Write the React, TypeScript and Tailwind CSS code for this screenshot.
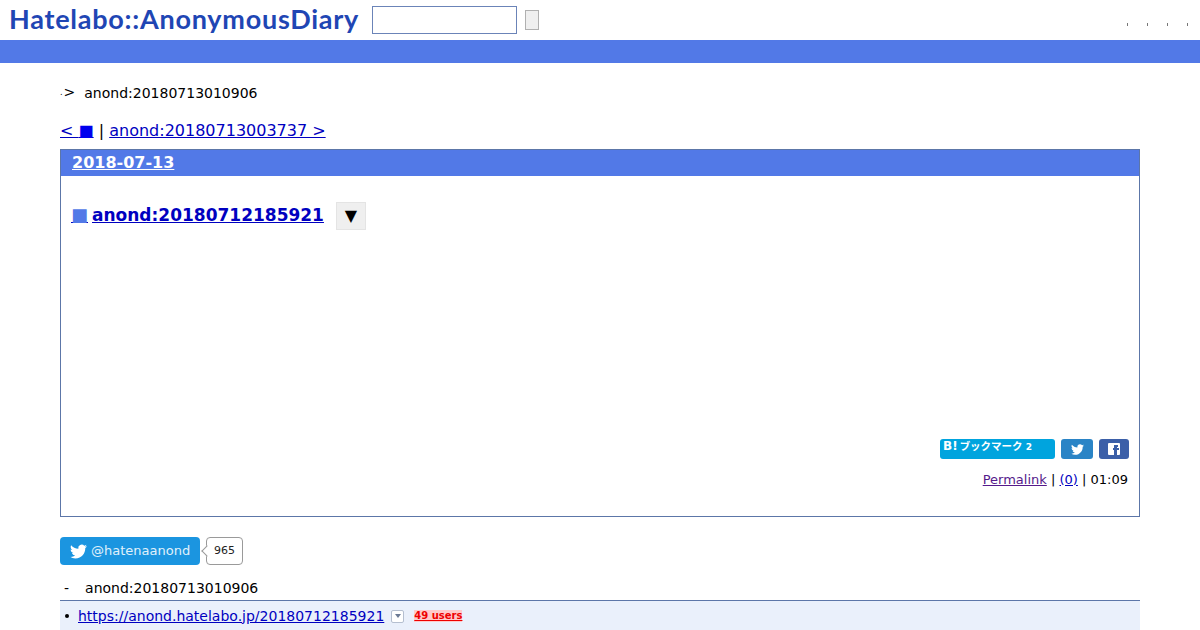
import React from 'react'

const SANS = 'font-["DejaVu_Sans",sans-serif]'

function TwitterBird({ className }: { className: string }) {
  return (
    <svg viewBox="0 0 24 24" fill="currentColor" className={className}>
      <path d="M23.95 4.57a10 10 0 0 1-2.82.78 4.96 4.96 0 0 0 2.16-2.72c-.95.55-2 .95-3.12 1.18a4.92 4.92 0 0 0-8.38 4.48C7.69 8.1 4.07 6.13 1.64 3.16a4.82 4.82 0 0 0-.67 2.48c0 1.71.87 3.21 2.19 4.1a4.9 4.9 0 0 1-2.23-.62v.06a4.92 4.92 0 0 0 3.95 4.83 5 5 0 0 1-2.21.08 4.94 4.94 0 0 0 4.6 3.42A9.87 9.87 0 0 1 0 19.54a14 14 0 0 0 7.56 2.21c9.05 0 14-7.5 14-13.98 0-.21 0-.42-.02-.63a9.94 9.94 0 0 0 2.46-2.55z" />
    </svg>
  )
}

function Header() {
  return (
    <header className="flex h-10 items-center pl-[9px]">
      <div className="mb-[2px] w-[363px] whitespace-nowrap font-['Lato',sans-serif] text-[27px] font-bold leading-10 tracking-[0.75px] text-[#1f46b4]">
        Hatelabo::AnonymousDiary
      </div>
      <input className="h-7 w-[145px] border border-[#6b84b8] bg-white" aria-label="search" />
      <button className="ml-2 h-5 w-[14px] border border-[#b0b0b0] bg-[#efefef]" aria-label="go" />
      <div className="ml-auto flex h-10 gap-[19px] pr-[12px] pt-[23px]">
        <span className="h-[3px] w-px bg-[#777]" />
        <span className="h-[3px] w-px bg-[#777]" />
        <span className="h-[3px] w-px bg-[#777]" />
        <span className="h-[3px] w-px bg-[#777]" />
      </div>
    </header>
  )
}

function ShareButtons() {
  return (
    <div className="flex justify-end gap-[6px] pr-[10px]">
      <div className="h-5 w-[115px] rounded-[3px] bg-[#00a4de] pl-[3px] text-[12px] font-bold leading-[14px] text-white">
        B!<span className="ml-[2px] font-['Noto_Sans_CJK_JP',sans-serif] text-[10.5px] font-bold">ブックマーク</span>
        <span className="ml-[3px] text-[9px]">2</span>
      </div>
      <div className="flex h-5 w-8 items-center justify-center rounded-[3px] bg-[#2a84c6] text-white">
        <TwitterBird className="h-[13px] w-[13px]" />
      </div>
      <div className="flex h-5 w-[30px] items-center justify-center rounded-[3px] bg-[#3b5fa8]">
        <div className="relative h-3 w-3 rounded-[1px] bg-white">
          <span className="absolute bottom-0 left-[6px] h-[9px] w-[2.5px] bg-[#3b5fa8]" />
          <span className="absolute left-[4.5px] top-[5px] h-[2px] w-[6px] bg-[#3b5fa8]" />
          <span className="absolute left-[6px] top-[2px] h-[2px] w-[4px] bg-[#3b5fa8]" />
        </div>
      </div>
    </div>
  )
}

function DayBox() {
  return (
    <section className="flex h-[368px] flex-col border border-[#5c76a8]">
      <h2 className="h-[26px] bg-[#5279e7] pl-[11px] text-[16px] font-bold leading-[25px] text-white">
        <a href="#" className="underline">2018-07-13</a>
      </h2>
      <div className="flex items-start pl-[10px] pt-[25px]">
        <a href="#" className="text-[18px] font-bold leading-7 text-[#5279e7] underline decoration-[#0000c0]">■</a>
        <a href="#" className="ml-[4px] text-[17px] font-bold leading-7 text-[#0000c0] underline">anond:20180712185921</a>
        <button className="ml-3 mt-px flex h-7 w-[30px] items-center justify-center border border-[#e4e4e4] bg-[#efefef] text-[16px] leading-none text-black">
          ▼
        </button>
      </div>
      <div className="mt-auto">
        <ShareButtons />
        <div className="pb-[26px] pr-[11px] pt-[11px] text-right text-[13px] leading-5">
          <a href="#" className="text-[#551a8b] underline">Permalink</a> |{' '}
          <a href="#" className="text-[#0000c0] underline">(0)</a> | 01:09
        </div>
      </div>
    </section>
  )
}

function FollowButton() {
  return (
    <div className="flex items-center">
      <div className="flex h-7 w-[140px] items-center rounded-[4px] bg-[#1b95e0] pl-[10px] text-[13px] text-[#e0f1fb]">
        <TwitterBird className="h-[17px] w-[17px] text-white" />
        <span className="ml-[4px]">@hatenaanond</span>
      </div>
      <div className="relative ml-[6px] flex h-7 w-[37px] items-center justify-center rounded-[4px] border border-[#9a9a9a] bg-white text-[11px] text-[#222]">
        <span className="absolute left-[-4px] top-[9px] h-2 w-2 rotate-45 border-b border-l border-[#9a9a9a] bg-white" />
        965
      </div>
    </div>
  )
}

export default function App() {
  return (
    <div className={`h-[630px] w-[1200px] overflow-hidden bg-white text-black ${SANS}`}>
      <Header />
      <div className="h-[23px] bg-[#5279e7]" />
      <main className="px-[60px]">
        <div className="mt-5 flex h-5 items-center text-[14px] leading-5">
          <span className="text-[8px] leading-[26px]">.</span>
          <span className="mb-[2px] ml-[1px]">&gt;</span>
          <span className="ml-[9px]">anond:20180713010906</span>
        </div>
        <div className="mt-[18px] h-[20px] whitespace-pre text-[16px] leading-5">
          <a href="#" className="text-[#0000c0] underline">&lt; <span className="text-[#0000ee]">■</span></a> |{' '}
          <a href="#" className="text-[#0000c0] underline">anond:20180713003737 &gt;</a>
        </div>
        <div className="mt-[8px]">
          <DayBox />
        </div>
        <div className="mt-5">
          <FollowButton />
        </div>
        <div className="mt-[13px] flex h-[23px] items-center border-b border-[#5c76a8] pb-px text-[14px]">
          <span className="ml-[4px]">-</span>
          <span className="ml-[16px]">anond:20180713010906</span>
        </div>
        <div className="flex h-[30px] items-center bg-[#eaf0fb] text-[14px]">
          <span className="ml-[5px] h-1 w-1 rounded-full bg-black" />
          <a href="#" className="ml-[9px] text-[#0000c0] underline">https://anond.hatelabo.jp/20180712185921</a>
          <span className="ml-[7px] flex h-[13px] w-[13px] items-center justify-center rounded-[2px] border border-[#b5bfd0] bg-white">
            <span className="h-0 w-0 border-x-[3.5px] border-t-[4px] border-x-transparent border-t-[#6b7a94]" />
          </span>
          <a href="#" className="ml-[10px] bg-[#ffcaca] text-[10px] font-bold leading-3 text-[#e00] underline">49 users</a>
        </div>
      </main>
    </div>
  )
}
